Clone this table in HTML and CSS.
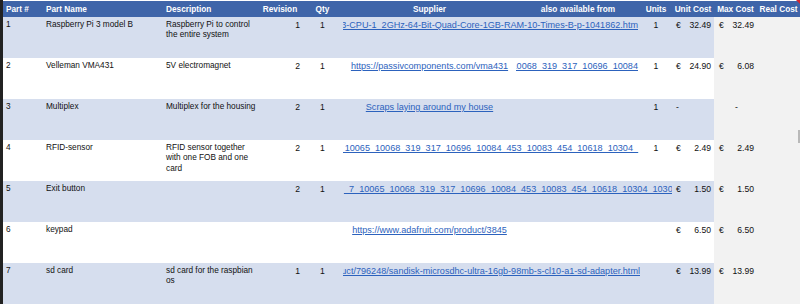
FILE: index.html
```html
<!DOCTYPE html>
<html>
<head>
<meta charset="utf-8">
<link rel="stylesheet" href="styles.css">
</head>
<body>
<div class="sheet">
  <table class="bom">
    <colgroup>
      <col class="w-part"><col class="w-name"><col class="w-desc"><col class="w-rev"><col class="w-qty">
      <col class="w-sup"><col class="w-also"><col class="w-units"><col class="w-unit"><col class="w-max"><col class="w-real">
    </colgroup>
    <thead>
      <tr>
        <th class="left">Part #</th>
        <th class="left">Part Name</th>
        <th class="left">Description</th>
        <th>Revision</th>
        <th>Qty</th>
        <th>Supplier</th>
        <th>also available from</th>
        <th>Units</th>
        <th>Unit Cost</th>
        <th>Max Cost</th>
        <th class="real-h">Real Cost<span class="flag"></span></th>
      </tr>
    </thead>
    <tbody>
      <tr class="band">
        <td>1</td>
        <td>Raspberry Pi 3 model B</td>
        <td class="desc">Raspberry Pi to control the entire system</td>
        <td class="num r">1</td>
        <td class="num c">1</td>
        <td colspan="2" class="spill"><div class="clip end pr2"><a href="#">https://www.banggood.com/Raspberry-Pi-3-Model-B-ARM-Cortex-A53-CPU-1_2GHz-64-Bit-Quad-Core-1GB-RAM-10-Times-B-p-1041862.htm</a></div></td>
        <td class="num c">1</td>
        <td class="cost"><div class="acct"><span>€</span><span>32.49</span></div></td>
        <td class="cost max"><div class="acct"><span>€</span><span>32.49</span></div></td>
        <td class="real"></td>
      </tr>
      <tr>
        <td>2</td>
        <td>Velleman VMA431</td>
        <td class="desc">5V electromagnet</td>
        <td class="num r">2</td>
        <td class="num c">1</td>
        <td class="spill"><div class="clip mid"><a href="#">https://passivcomponents.com/vma431</a></div></td>
        <td class="spill"><div class="clip end pr2"><a href="#">https://www.conrad.nl/nl/search.html?cat=_7_10065_10068_319_317_10696_10084</a></div></td>
        <td class="num c">1</td>
        <td class="cost"><div class="acct"><span>€</span><span>24.90</span></div></td>
        <td class="cost max"><div class="acct"><span>€</span><span>6.08</span></div></td>
        <td class="real"></td>
      </tr>
      <tr class="band">
        <td>3</td>
        <td>Multiplex</td>
        <td class="desc">Multiplex for the housing</td>
        <td class="num r">2</td>
        <td class="num c">1</td>
        <td class="spill"><div class="clip mid"><a href="#">Scraps laying around my house</a></div></td>
        <td></td>
        <td class="num c">1</td>
        <td class="cost"><div class="acct"><span>-</span></div></td>
        <td class="cost max"><div class="acct mid"><span>-</span></div></td>
        <td class="real"></td>
      </tr>
      <tr>
        <td>4</td>
        <td>RFID-sensor</td>
        <td class="desc">RFID sensor together with one FOB and one card</td>
        <td class="num r">2</td>
        <td class="num c">1</td>
        <td colspan="2" class="spill"><div class="clip end pr2"><a href="#">https://www.conrad.nl/nl/rfid-lezer-module.html?cat=_7_10065_10068_319_317_10696_10084_453_10083_454_10618_10304_</a></div></td>
        <td class="num c">1</td>
        <td class="cost"><div class="acct"><span>€</span><span>2.49</span></div></td>
        <td class="cost max"><div class="acct"><span>€</span><span>2.49</span></div></td>
        <td class="real"></td>
      </tr>
      <tr class="band">
        <td>5</td>
        <td>Exit button</td>
        <td class="desc"></td>
        <td class="num r">2</td>
        <td class="num c">1</td>
        <td colspan="3" class="spill"><div class="clip"><a href="#">_7_10065_10068_319_317_10696_10084_453_10083_454_10618_10304_10305_10306</a></div></td>
        <td class="cost"><div class="acct"><span>€</span><span>1.50</span></div></td>
        <td class="cost max"><div class="acct"><span>€</span><span>1.50</span></div></td>
        <td class="real"></td>
      </tr>
      <tr>
        <td>6</td>
        <td>keypad</td>
        <td class="desc"></td>
        <td></td>
        <td></td>
        <td class="spill"><div class="clip mid"><a href="#">https://www.adafruit.com/product/3845</a></div></td>
        <td></td>
        <td></td>
        <td class="cost"><div class="acct"><span>€</span><span>6.50</span></div></td>
        <td class="cost max"><div class="acct"><span>€</span><span>6.50</span></div></td>
        <td class="real"></td>
      </tr>
      <tr class="band">
        <td>7</td>
        <td>sd card</td>
        <td class="desc">sd card for the raspbian os</td>
        <td class="num r">1</td>
        <td class="num c">1</td>
        <td colspan="2" class="spill"><div class="clip end pr1"><a href="#">https://www.coolblue.nl/product/796248/sandisk-microsdhc-ultra-16gb-98mb-s-cl10-a1-sd-adapter.html</a></div></td>
        <td></td>
        <td class="cost"><div class="acct"><span>€</span><span>13.99</span></div></td>
        <td class="cost max"><div class="acct"><span>€</span><span>13.99</span></div></td>
        <td class="real"></td>
      </tr>
    </tbody>
  </table>
  <div class="scroll-nub"></div>
</div>
</body>
</html>
```
FILE: styles.css
```css
html, body {
  margin: 0;
  padding: 0;
  background: #ffffff;
}

.sheet {
  position: relative;
  width: 800px;
  height: 304px;
  box-sizing: border-box;
  border-left: 3px solid #222222;
  padding-top: 1px;
  overflow: hidden;
  font-family: "Liberation Sans", Arial, sans-serif;
  color: #111111;
}

.bom {
  border-collapse: collapse;
  table-layout: fixed;
  width: 797px;
  font-size: 8.25px;
  line-height: 10.4px;
}

.w-part { width: 40px; }
.w-name { width: 120px; }
.w-desc { width: 95px; }
.w-rev { width: 44px; }
.w-qty { width: 41px; }
.w-sup { width: 173px; }
.w-also { width: 124px; }
.w-units { width: 32px; }
.w-unit { width: 42px; }
.w-max { width: 43px; }
.w-real { width: 43px; }

thead tr {
  height: 16px;
  background: #3f65a9;
}

th {
  color: #ffffff;
  font-weight: bold;
  text-align: center;
  white-space: nowrap;
  padding: 2px 0 0 0;
  vertical-align: middle;
  overflow: hidden;
}

th.left {
  text-align: left;
  padding-left: 3px;
}

th.real-h {
  position: relative;
  overflow: visible;
}

.flag {
  position: absolute;
  right: 0;
  top: -1px;
  width: 0;
  height: 0;
  border-top: 4px solid #d7262e;
  border-left: 4px solid transparent;
}

tbody tr {
  height: 41px;
  background: #ffffff;
}

tbody tr.band {
  background: #d6deee;
}

td {
  vertical-align: top;
  padding: 3px 2px 0 3px;
  white-space: nowrap;
  overflow: hidden;
}

td.desc {
  white-space: normal;
  padding-right: 2px;
}

td.num {
  font-size: 8.6px;
}

td.r {
  text-align: right;
  padding-right: 2px;
}

td.c {
  text-align: center;
  padding-left: 0;
  padding-right: 0;
}

td.spill {
  padding: 0;
}

.clip {
  display: flex;
  overflow: hidden;
  white-space: nowrap;
  padding-left: 1px;
  padding-top: 3px;
}

.clip.end {
  justify-content: flex-end;
  padding-left: 0;
}

.clip.mid {
  justify-content: center;
  padding-left: 0;
}

.clip.pr2 { padding-right: 2px; }
.clip.pr1 { padding-right: 0; }

.clip a {
  flex: none;
  color: #2c62bd;
  text-decoration: underline;
  font-size: 9.1px;
  line-height: 10.4px;
}

td.cost {
  padding: 3px 3px 0 4px;
  font-size: 8.6px;
}

td.max {
  background: #f2f2f2;
  padding: 3px 3px 0 5px;
}

td.real {
  background: #f2f2f2;
}

.acct {
  display: flex;
  justify-content: space-between;
}

.acct.mid {
  justify-content: center;
}

.scroll-nub {
  position: absolute;
  right: 0;
  top: 130px;
  width: 2px;
  height: 13px;
  background: #b9b9b9;
}
```
